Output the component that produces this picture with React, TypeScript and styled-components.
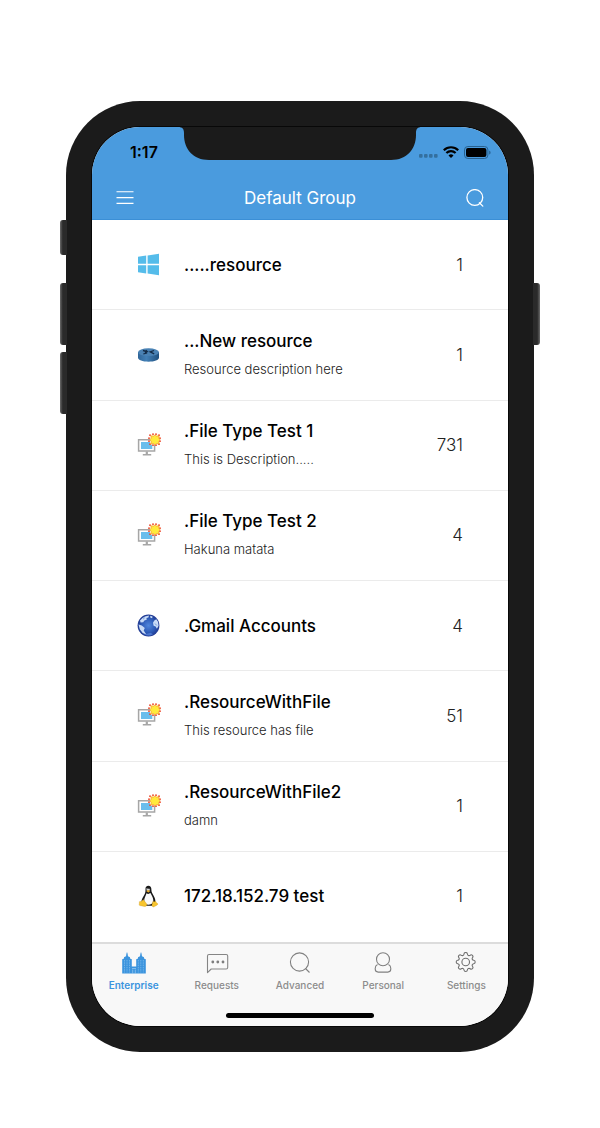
import React from 'react';
import styled, { createGlobalStyle } from 'styled-components';

const GlobalStyle = createGlobalStyle`
  * { box-sizing: border-box; }
  body {
    margin: 0;
    background: #fff;
    color: #000;
    font-family: Inter, "Liberation Sans", sans-serif;
  }
  button { font: inherit; color: inherit; background: none; border: 0; padding: 0; cursor: pointer; }
  svg { display: block; }
`;

const Page = styled.main`
  display: flex;
  justify-content: center;
  padding: 101px 66px 75px;
`;

const Phone = styled.div`
  position: relative;
  flex: 1;
  max-width: 520px;
  padding: 26px;
  border-radius: 74px;
  background: #1b1b1b;
`;

const SideKey = styled.span<{ $side: 'left' | 'right'; $top: number; $length: number }>`
  position: absolute;
  top: ${p => p.$top}px;
  ${p => p.$side}: -6px;
  width: 7px;
  height: ${p => p.$length}px;
  border-radius: ${p => (p.$side === 'left' ? '3px 0 0 3px' : '0 3px 3px 0')};
  background: linear-gradient(to ${p => p.$side}, #2a2a2a 60%, #6a6a6a);
`;

const Screen = styled.div`
  position: relative;
  display: flex;
  flex-direction: column;
  overflow: hidden;
  border-radius: 48px;
  background: #fff;
  box-shadow: 0 0 0 1px #080808;
`;

const Notch = styled.svg`
  position: absolute;
  top: -1px;
  left: 50%;
  transform: translateX(-50%);
`;

const Header = styled.header`
  background: #4a9bde;
  border-bottom: 1px solid #3b8fd6;
`;

const StatusBar = styled.div`
  display: flex;
  justify-content: space-between;
  align-items: center;
  height: 50px;
  padding: 0 17px 0 38px;
`;

const Clock = styled.time`
  font-size: 16px;
  font-weight: 600;
`;

const StatusIcons = styled.div`
  display: flex;
  align-items: center;
  gap: 5px;
`;

const TitleBar = styled.div`
  display: flex;
  justify-content: space-between;
  align-items: center;
  height: 42px;
  padding: 0 24px;
  color: #fff;
`;

const Title = styled.h1`
  margin: 0;
  font-size: 17px;
  font-weight: 400;
  line-height: 20px;
`;

const ResourceList = styled.ul`
  display: grid;
  grid-auto-rows: 1fr;
  min-height: 722px;
  margin: 0;
  padding: 0;
  list-style: none;
`;

const ResourceItem = styled.li`
  display: flex;
  border-bottom: 1px solid #ebebeb;
  &:last-child { border-bottom-color: transparent; }
`;

const ResourceButton = styled.button`
  display: flex;
  align-items: center;
  flex: 1;
  gap: 24px;
  padding: 0 45px;
  text-align: left;
`;

const ResourceText = styled.span`
  display: flex;
  flex: 1;
  flex-direction: column;
  gap: 8px;
  line-height: 20px;
`;

const ResourceName = styled.span`
  font-size: 17px;
  font-weight: 450;
`;

const ResourceNote = styled.span`
  font-size: 13px;
  font-weight: 350;
  color: #222;
`;

const Count = styled.span`
  font-size: 17px;
  font-weight: 300;
  color: #222;
`;

const Footer = styled.footer`
  display: flex;
  flex-direction: column;
  justify-content: space-between;
  align-items: center;
  height: 84px;
  padding-bottom: 8px;
  border-top: 2px solid #dcdcdc;
  background: #f8f8f8;
`;

const Tabs = styled.nav`
  display: grid;
  grid-template-columns: repeat(5, 1fr);
  width: 100%;
`;

const Tab = styled.button<{ $active?: boolean }>`
  display: flex;
  flex-direction: column;
  align-items: center;
  gap: 3px;
  padding-top: 8px;
  color: ${p => (p.$active ? '#3b94de' : '#8c8c8c')};
  font-size: 10px;
  font-weight: ${p => (p.$active ? 600 : 500)};
  line-height: 14px;
`;

const HomeBar = styled.div`
  width: 148px;
  height: 5px;
  border-radius: 3px;
  background: #000;
`;

const DotsSlot = styled.span`
  padding-top: 8px;
`;

const SignalDots = () => (
  <svg width="19" height="4" viewBox="0 0 19 4" fill="#34709f">
    {[0, 5, 10, 15].map(x => (
      <rect key={x} x={x} y="0" width="3.6" height="3.8" rx="1" />
    ))}
  </svg>
);

const Wifi = () => (
  <svg width="16" height="12" viewBox="0 0 16 12" fill="none" stroke="#000" strokeWidth="2.2">
    <path d="M.8 4.2a10.3 10.3 0 0 1 14.4 0" />
    <path d="M3.4 7a6.5 6.5 0 0 1 9.2 0" />
    <path d="M8 11.9 5.5 9.4a3.6 3.6 0 0 1 5 0z" fill="#000" stroke="none" />
  </svg>
);

const Battery = () => (
  <svg width="27" height="13" viewBox="0 0 27 13">
    <rect x=".5" y=".5" width="23.4" height="12" rx="3.4" fill="none" stroke="#28618f" />
    <rect x="2" y="2" width="20.4" height="9" rx="2" fill="#000" />
    <path d="M25.2 4.4c1.8.6 1.8 3.6 0 4.2z" fill="#28618f" />
  </svg>
);

const MenuIcon = () => (
  <svg width="18" height="14" viewBox="0 0 18 14" stroke="#fff" strokeWidth="1.1">
    <path d="M.5 .8h17M.5 6.6h17M.5 12.4h17" />
  </svg>
);

const HeaderSearchIcon = () => (
  <svg width="18" height="19" viewBox="0 0 18 19" fill="none" stroke="#fff" strokeWidth="1.3" strokeLinecap="round">
    <circle cx="8.8" cy="8.5" r="7.9" />
    <path d="m13.4 13.7 3.4 3.4" />
  </svg>
);

const WindowsIcon = () => (
  <svg width="23" height="23" viewBox="0 0 23 23" fill="#55bcea">
    <path d="M1 3.8 9.2 2.6v8.1H1zM10.6 2.4 22 .8v9.9H10.600zM1 12.3h8.2v8.1L1 19.2zM10.6 12.3H22v9.900l-11.4-1.6z" />
  </svg>
);

const RouterIcon = () => (
  <svg width="23" height="23" viewBox="0 0 23 23">
    <defs>
      <linearGradient id="routerSide">
        <stop offset="0" stopColor="#2f6598" />
        <stop offset=".4" stopColor="#4380b6" />
        <stop offset="1" stopColor="#1f507f" />
      </linearGradient>
    </defs>
    <path d="M1 9v5.500C1 17 5.600 18.700 11.500 18.700S22 17 22 14.500V9z" fill="url(#routerSide)" />
    <ellipse cx="11.5" cy="9.200" rx="10.500" ry="3.900" fill="#4a82b4" />
    <path d="M6 7.500 10 8.600M6.300 11l3.800-1.200M17 7.500l-3.800 1.400 4 1.900M8.800 7.200l1.500 1.500-2.500.5" fill="none" stroke="#132c48" strokeWidth="1.300" />
  </svg>
);

const burst = [
  [13, 1], [16, 0], [19, 0], [22, 1], [12, 4], [23, 4], [12, 7], [23, 7], [13, 10], [16, 11], [19, 11], [22, 10],
];

const ComputerIcon = () => (
  <svg width="23" height="23" viewBox="0 0 23 23" overflow="visible">
    <path d="M1.600 5.800h16v11.200h-16z" fill="#fff" stroke="#a6a6a6" strokeWidth="1.500" />
    <path d="M4 8h11.300v7H4z" fill="#69bdec" />
    <path d="M8.700 17.500h2.200v2.600h3.300v1.500H5.800v-1.500h2.900z" fill="#a6a6a6" />
    <rect x="13" y=".8" width="10" height="10" fill="#fff3c4" />
    {burst.map(([x, y]) => (
      <rect key={`${x}-${y}`} x={x - 0.800} y={y - 0.600} width="1.600" height="1.600" fill="#ee4a2c" />
    ))}
    <path d="m18 .9 1.500 1.300 2.400-.3-.2 2.200L23 5.800l-1.300 1.700.2 2.300-2.400-.3L18 10.800l-1.500-1.300-2.400.3.200-2.300L13 5.800l1.300-1.700-.2-2.200 2.400.3z" fill="#ffea3c" stroke="#f79a2b" strokeWidth=".7" />
  </svg>
);

const GlobeIcon = () => (
  <svg width="23" height="23" viewBox="0 0 23 23">
    <defs>
      <radialGradient id="globeSea" cx=".5" cy=".5" r=".55">
        <stop offset="0" stopColor="#4f86dc" />
        <stop offset=".6" stopColor="#2c59b5" />
        <stop offset="1" stopColor="#1d2f86" />
      </radialGradient>
    </defs>
    <circle cx="11.500" cy="11.500" r="10.900" fill="url(#globeSea)" />
    <path d="M3 6.400 5.600 3.900 8 2.400l4-.9-.6 1.900-1.900.6.2 1.700-2.300.8-1.200 1.700-2.600.4zM13.200 1.700l2.300.8-.3 1.800-1.800-.5zM17.300 6.600l2-1.400 1.700 2.600.6 4-1.700 3-1.300-2.400-2-.7-.6-2.900zM1.500 10.500l3.300.9 3 2.600-1.100 2.400 2.600 4.200-3.600-1.700-2.900-3.700z" fill="#c9dcf7" />
    <path d="m6 5.200 1.800-1.500M18 9.500l1.800 2" stroke="#6d95d8" strokeWidth=".9" />
    <path d="M7 20.400c3 1.500 6.500 1.300 9-.2l-2.500-1.500z" fill="#4a76cf" />
  </svg>
);

const PenguinIcon = () => (
  <svg width="23" height="23" viewBox="0 0 23 23">
    <path d="M8.500 4.600C8.200 2 9.600.8 11.400.8s3.100 1.500 3 4c-.1 2.700 1.300 3.900 2.500 6.400 1 2 2 4.500 1.300 7l-2 2.600H7l-2.500-3c-.2-2.700.8-4.600 2-6.500 1-1.700 2.200-3.400 2-6.700z" fill="#191919" />
    <path d="M9.500 8.300c1.300.9 2.700.7 3.900-.2 1 2 2.700 4 2.900 7 .1 2.400-1 4.700-4.600 4.700-3.200 0-4.600-2-4.500-4.500.1-2.600 1.700-4.300 2.300-7z" fill="#fafafa" />
    <path d="M9.400 3.600c.8-.7 1.300 0 1.500.7.500-.9 1.600-1 2 .2l-.4 1.300H9.700z" fill="#d8d8d8" />
    <path d="m9.300 6.200 1.700-1.100 2.200.8-1.700 1.500z" fill="#e9ae2e" />
    <path d="m6.300 14.500 3.500 4.600c.6 1.300-.6 2.700-2.500 2.300l-4.600-.9c-.9-.4-.4-1.600-.3-2.500l-.1-1.300 2.200-.4zM16 15.900l1 1 1.600-.8.500 1.200 1.900 1.700c-.4 1.100-2.500 1.800-3.500 2.600-1.400.7-2.600.1-2.600-1.500z" fill="#f7c52f" stroke="#c48b14" strokeWidth=".3" />
  </svg>
);

const towerWindows = [2.5, 5, 7.5, 16.3, 18.8, 21.3];

const EnterpriseIcon = () => (
  <svg width="24" height="23" viewBox="0 0 24 23" fill="#3b94de">
    <path d="M.2 21.500V7.300l1.800-.7V5.300l2-1 .4-2.600L5 0l.6 1.700.4 2.600 2 1v1.300l1.800.7v7.200h4.400V7.300l1.800-.7V5.300l2-1 .4-2.600L19 0l.6 1.700.4 2.600 2 1v1.300l1.800.7v14.200z" />
    <g stroke="#c4e2fa" strokeWidth=".4" strokeDasharray="1.500 .8">
      {towerWindows.map(x => (
        <path key={x} d={`M${x} 8v12.500`} />
      ))}
    </g>
    <path d="M10 16.500h4M10.700 21.500v-4M13.300 21.500v-4" stroke="#c4e2fa" strokeWidth=".5" />
  </svg>
);

const RequestsIcon = () => (
  <svg width="24" height="23" viewBox="0 0 24 23" fill="none" stroke="#858585" strokeWidth="1.100">
    <path d="M2.500 20.600V4q0-1.500 1.500-1.500h17.200q1.500 0 1.500 1.500v11.500q0 1.500-1.500 1.500H6.200z" strokeLinejoin="round" />
    <g fill="#7d7d7d" stroke="none">
      <circle cx="7.800" cy="10" r="1.400" />
      <circle cx="12.800" cy="10" r="1.400" />
      <circle cx="18" cy="10" r="1.400" />
    </g>
  </svg>
);

const AdvancedIcon = () => (
  <svg width="24" height="23" viewBox="0 0 24 23" fill="none" stroke="#808080" strokeWidth="1.100">
    <circle cx="11.500" cy="10" r="9.100" />
    <path d="m17.500 16.500 4 4" />
  </svg>
);

const PersonalIcon = () => (
  <svg width="24" height="23" viewBox="0 0 24 23" fill="none" stroke="#808080" strokeWidth="1.100">
    <circle cx="12" cy="7.200" r="6.500" />
    <path d="M6.500 12.400C5 13.100 4.200 14.600 4.200 16.500v.6c0 1.800 1.200 3 3 3h9.600c1.800 0 3-1.200 3-3v-.6c0-1.900-.8-3.400-2.300-4.100" />
  </svg>
);

const SettingsIcon = () => (
  <svg width="24" height="23" viewBox="0 0 24 23" fill="none" stroke="#6f6f6f" strokeWidth="1.100" strokeLinejoin="round">
    <circle cx="11.700" cy="10" r="3.800" />
    <path d="M10 2c.2-2 3.200-2 3.400 0 .2 1.500 1.600 2 2.800 1.200 1.600-1.200 3.500.8 2.400 2.300-.9 1.200-.3 2.600 1.100 2.800 2 .3 2 3.100 0 3.400-1.400.2-2 1.600-1.100 2.800 1.100 1.500-.8 3.500-2.400 2.300-1.200-.8-2.600-.3-2.800 1.200-.2 2-3.200 2-3.400 0-.2-1.500-1.600-2-2.800-1.200-1.600 1.200-3.500-.8-2.400-2.300.9-1.200.3-2.600-1.100-2.800-2-.3-2-3.100 0-3.400 1.400-.2 2-1.600 1.100-2.800C3.700 4 5.600 2 7.200 3.200 8.400 4 9.800 3.500 10 2z" />
  </svg>
);

const resources: { icon: React.FC; name: string; note?: string; count: number }[] = [
  { icon: WindowsIcon, name: '.....resource', count: 1 },
  { icon: RouterIcon, name: '...New resource', note: 'Resource description here', count: 1 },
  { icon: ComputerIcon, name: '.File Type Test 1', note: 'This is Description.....', count: 731 },
  { icon: ComputerIcon, name: '.File Type Test 2', note: 'Hakuna matata', count: 4 },
  { icon: GlobeIcon, name: '.Gmail Accounts', count: 4 },
  { icon: ComputerIcon, name: '.ResourceWithFile', note: 'This resource has file', count: 51 },
  { icon: ComputerIcon, name: '.ResourceWithFile2', note: 'damn', count: 1 },
  { icon: PenguinIcon, name: '172.18.152.79 test', count: 1 },
];

const tabs: { icon: React.FC; label: string }[] = [
  { icon: EnterpriseIcon, label: 'Enterprise' },
  { icon: RequestsIcon, label: 'Requests' },
  { icon: AdvancedIcon, label: 'Advanced' },
  { icon: PersonalIcon, label: 'Personal' },
  { icon: SettingsIcon, label: 'Settings' },
];

export default function App() {
  return (
    <Page>
      <GlobalStyle />
      <Phone>
        <SideKey $side="left" $top={119} $length={35} />
        <SideKey $side="left" $top={182} $length={62} />
        <SideKey $side="left" $top={251} $length={62} />
        <SideKey $side="right" $top={182} $length={62} />
        <Screen>
          <Header>
            <StatusBar>
              <Clock>1:17</Clock>
              <StatusIcons>
                <DotsSlot><SignalDots /></DotsSlot>
                <Wifi />
                <Battery />
              </StatusIcons>
            </StatusBar>
            <TitleBar>
              <button type="button" aria-label="Menu"><MenuIcon /></button>
              <Title>Default Group</Title>
              <button type="button" aria-label="Search"><HeaderSearchIcon /></button>
            </TitleBar>
          </Header>
          <ResourceList>
            {resources.map(({ icon: Icon, name, note, count }) => (
              <ResourceItem key={name}>
                <ResourceButton type="button">
                  <Icon />
                  <ResourceText>
                    <ResourceName>{name}</ResourceName>
                    {note && <ResourceNote>{note}</ResourceNote>}
                  </ResourceText>
                  <Count>{count}</Count>
                </ResourceButton>
              </ResourceItem>
            ))}
          </ResourceList>
          <Footer>
            <Tabs>
              {tabs.map(({ icon: Icon, label }, i) => (
                <Tab key={label} type="button" $active={i === 0}>
                  <Icon />
                  {label}
                </Tab>
              ))}
            </Tabs>
            <HomeBar />
          </Footer>
          <Notch width="244" height="34" viewBox="0 0 244 34" fill="#1b1b1b">
            <path d="M0 0h244v1c-4.500 0-6 2-6 6v2c0 14-9 25-25 25H31C15 34 6 23 6 9V7c0-4-1.500-6-6-6z" />
          </Notch>
        </Screen>
      </Phone>
    </Page>
  );
}
